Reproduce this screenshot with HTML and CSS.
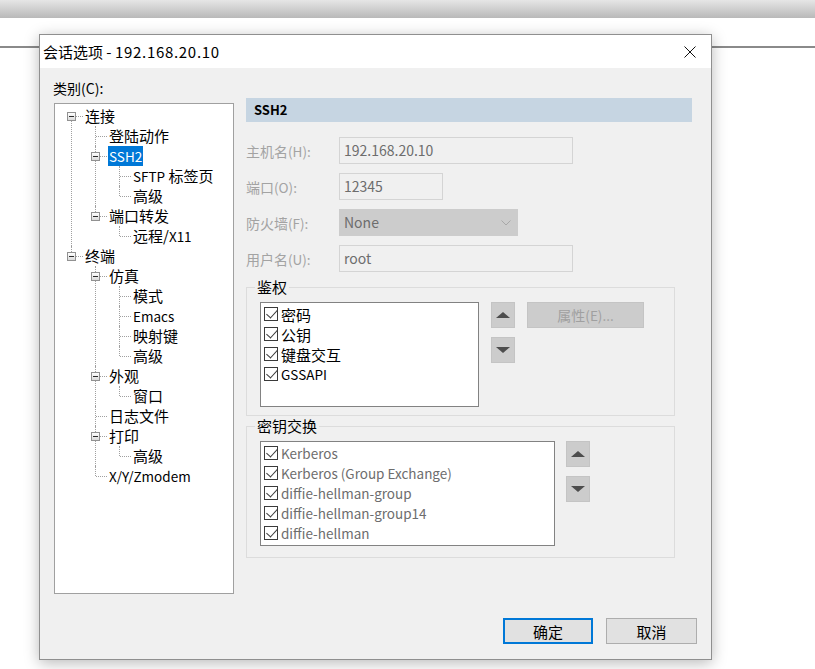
FILE: index.html
```html
<!DOCTYPE html>
<html lang="zh-CN">
<head>
<meta charset="UTF-8">
<title>会话选项</title>
<link rel="stylesheet" href="styles.css">
</head>
<body>
<div id="desktop">
  <div class="dialog">
    <div class="titlebar">
      <span class="title">会话选项 - <span class="addr">192.168.20.10</span></span>
      <span class="close">
        <svg width="12" height="12" viewBox="0 0 12 12"><path d="M0.5 0.5L11.5 11.5M11.5 0.5L0.5 11.5" stroke="#111" stroke-width="1" fill="none"/></svg>
      </span>
    </div>

    <div class="dialog-body">
      <div class="main">
        <div class="left">
          <div class="caption">类别(C):</div>
          <div class="tree-box">
            <ul class="tree">
              <li><div class="row"><span class="exp"></span>连接</div>
                <ul>
                  <li><div class="row">登陆动作</div></li>
                  <li><div class="row"><span class="exp"></span><span class="sel lat">SSH2</span></div>
                    <ul>
                      <li><div class="row"><span class="lat">SFTP</span> 标签页</div></li>
                      <li><div class="row">高级</div></li>
                    </ul>
                  </li>
                  <li><div class="row"><span class="exp"></span>端口转发</div>
                    <ul>
                      <li><div class="row">远程/<span class="lat">X11</span></div></li>
                    </ul>
                  </li>
                </ul>
              </li>
              <li><div class="row"><span class="exp"></span>终端</div>
                <ul>
                  <li><div class="row"><span class="exp"></span>仿真</div>
                    <ul>
                      <li><div class="row">模式</div></li>
                      <li><div class="row"><span class="lat">Emacs</span></div></li>
                      <li><div class="row">映射键</div></li>
                      <li><div class="row">高级</div></li>
                    </ul>
                  </li>
                  <li><div class="row"><span class="exp"></span>外观</div>
                    <ul>
                      <li><div class="row">窗口</div></li>
                    </ul>
                  </li>
                  <li><div class="row">日志文件</div></li>
                  <li><div class="row"><span class="exp"></span>打印</div>
                    <ul>
                      <li><div class="row">高级</div></li>
                    </ul>
                  </li>
                  <li><div class="row"><span class="lat">X/Y/Zmodem</span></div></li>
                </ul>
              </li>
            </ul>
          </div>
        </div>

        <div class="right">
          <div class="section-bar">SSH2</div>

          <div class="form">
            <label>主机名<span class="lat">(H):</span></label>
            <div class="field w-long">192.168.20.10</div>
            <label>端口<span class="lat">(O):</span></label>
            <div class="field w-short">12345</div>
            <label>防火墙<span class="lat">(F):</span></label>
            <div class="field select w-mid">None
              <svg width="10" height="6" viewBox="0 0 10 6"><path d="M0.5 0.5L5 5L9.5 0.5" stroke="#a8a8a8" fill="none"/></svg>
            </div>
            <label>用户名<span class="lat">(U):</span></label>
            <div class="field w-long">root</div>
          </div>

          <fieldset class="group">
            <legend>鉴权</legend>
            <ul class="listbox auth">
              <li><span class="check"></span>密码</li>
              <li><span class="check"></span>公钥</li>
              <li><span class="check"></span>键盘交互</li>
              <li><span class="check"></span><span class="lat">GSSAPI</span></li>
            </ul>
            <div class="arrows">
              <div class="arrow up"></div>
              <div class="arrow down"></div>
            </div>
            <div class="btn-prop">属性<span class="lat">(E)...</span></div>
          </fieldset>

          <fieldset class="group kex">
            <legend>密钥交换</legend>
            <ul class="listbox dim">
              <li><span class="check"></span><span class="lat">Kerberos</span></li>
              <li><span class="check"></span><span class="lat">Kerberos (Group Exchange)</span></li>
              <li><span class="check"></span><span class="lat">diffie-hellman-group</span></li>
              <li><span class="check"></span><span class="lat">diffie-hellman-group14</span></li>
              <li><span class="check"></span><span class="lat">diffie-hellman</span></li>
            </ul>
            <div class="arrows">
              <div class="arrow up"></div>
              <div class="arrow down"></div>
            </div>
          </fieldset>
        </div>
      </div>

      <div class="footer">
        <button class="btn default">确定</button>
        <button class="btn">取消</button>
      </div>
    </div>
  </div>
</div>
</body>
</html>
```

FILE: styles.css
```css
* {
    box-sizing: border-box;
}

body {
    margin: 0;
    font-family: "Noto Sans CJK SC", "Noto Sans", sans-serif;
    font-size: 14px;
    color: #000;
    background: #fff;
}

#desktop {
    height: 669px;
    padding: 34px 0 0 39px;
    overflow: hidden;
    background:
        linear-gradient(#e6e6e6, #b9b9b9) 0 0 / 100% 18px no-repeat,
        linear-gradient(#8a8a8a, #8a8a8a) 0 46px / 100% 2px no-repeat,
        #fff;
}

.dialog {
    width: 673px;
    height: 626px;
    border: 1px solid #8f8f8f;
    background: #f0f0f0;
    box-shadow: 0 3px 14px rgba(0, 0, 0, 0.28);
    display: flex;
    flex-direction: column;
}

.titlebar {
    height: 33px;
    background: #fff;
    display: flex;
    align-items: center;
}

.title {
    flex: 1;
    padding-left: 3px;
    font-size: 15px;
}

.title .addr {
    letter-spacing: 0.7px;
}

.close {
    width: 42px;
    height: 33px;
    display: flex;
    align-items: center;
    justify-content: center;
}

.dialog-body {
    flex: 1;
    display: flex;
    flex-direction: column;
}

.main {
    display: flex;
    gap: 12px;
    padding: 10px 0 0 14px;
}

.lat {
    font-size: 13.5px;
}

/* left: category tree */

.caption {
    line-height: 20px;
    margin: 0 0 5px -1px;
}

.tree-box {
    width: 180px;
    height: 491px;
    background: #fff;
    border: 1px solid #a0a0a0;
    padding-top: 2px;
    font-size: 15px;
}

.tree, .tree ul {
    list-style: none;
    margin: 0;
    padding: 0;
}

.tree ul {
    padding-left: 24px;
}

.tree li {
    position: relative;
}

.tree li::before {
    content: "";
    position: absolute;
    left: 16px;
    top: 0;
    bottom: 0;
    border-left: 1px dotted #a0a0a0;
}

.tree li:last-child::before {
    bottom: auto;
    height: 10px;
}

.tree > li:first-child::before {
    top: 10px;
}

.tree .row {
    position: relative;
    height: 20px;
    line-height: 20px;
    padding-left: 30px;
    white-space: nowrap;
}

.tree .row::before {
    content: "";
    position: absolute;
    left: 17px;
    top: 10px;
    width: 11px;
    border-top: 1px dotted #a0a0a0;
}

.tree .exp {
    position: absolute;
    left: 12px;
    top: 6px;
    width: 9px;
    height: 9px;
    border: 1px solid #919191;
    background: linear-gradient(#ffffff, #dadada);
    z-index: 1;
}

.tree .exp::after {
    content: "";
    position: absolute;
    left: 1px;
    top: 3px;
    width: 5px;
    height: 1px;
    background: #2b2b2b;
}

.tree .sel {
    display: inline-block;
    background: #0078d7;
    color: #fff;
    padding: 0 1px;
    margin-left: -1px;
}

/* right: SSH2 page */

.right {
    width: 446px;
    padding-top: 20px;
}

.section-bar {
    height: 24px;
    line-height: 24px;
    background: #c6d5e2;
    padding-left: 8px;
    font-size: 13px;
    font-weight: bold;
}

.form {
    display: grid;
    grid-template-columns: 93px auto;
    grid-auto-rows: 27px;
    row-gap: 9px;
    align-items: center;
    margin-top: 15px;
}

.form label {
    color: #a3a3a3;
}

.field {
    height: 27px;
    line-height: 25px;
    padding-left: 4px;
    border: 1px solid #d4d4d4;
    background: #f0f0f0;
    color: #6d6d6d;
}

.w-long {
    width: 234px;
}

.w-short {
    width: 104px;
}

.w-mid {
    width: 179px;
}

.field.select {
    position: relative;
    background: #cccccc;
    border-color: #cccccc;
}

.field.select svg {
    position: absolute;
    right: 6px;
    top: 10px;
}

.group {
    display: flex;
    align-items: flex-start;
    width: 429px;
    min-width: 0;
    margin: 6px 0 0 0;
    padding: 6px 12px 8px 13px;
    border: 1px solid #dcdcdc;
}

.group.kex {
    margin-top: 1px;
    padding-bottom: 11px;
}

.group legend {
    margin-left: -5px;
    padding: 0 2px;
    line-height: 18px;
    font-size: 15px;
}

.listbox {
    list-style: none;
    margin: 0;
    width: 219px;
    height: 105px;
    padding: 1px 0 0 3px;
    background: #fff;
    border: 1px solid #828282;
    font-size: 15px;
}

.kex .listbox {
    width: 295px;
}

.listbox li {
    height: 20px;
    display: flex;
    align-items: center;
    white-space: nowrap;
}

.listbox.dim li {
    color: #6d6d6d;
}

.check {
    position: relative;
    flex: none;
    width: 14px;
    height: 14px;
    margin-right: 3px;
    border: 1px solid #3a3a3a;
    background: #fff;
}

.check::after {
    content: "";
    position: absolute;
    left: 4px;
    top: -1px;
    width: 5px;
    height: 10px;
    border: solid #3a3a3a;
    border-width: 0 1px 1px 0;
    transform: rotate(42deg);
}

.arrows {
    display: flex;
    flex-direction: column;
    gap: 9px;
    margin-left: 12px;
}

.kex .arrows {
    margin-left: 11px;
}

.arrow {
    width: 24px;
    height: 26px;
    background: #cccccc;
    border: 1px solid #c4c4c4;
    display: flex;
    align-items: center;
    justify-content: center;
}

.arrow::after {
    content: "";
    border-left: 7px solid transparent;
    border-right: 7px solid transparent;
}

.arrow.up::after {
    border-bottom: 6px solid #4d4d4d;
}

.arrow.down::after {
    border-top: 6px solid #4d4d4d;
}

.btn-prop {
    margin-left: 12px;
    width: 117px;
    height: 26px;
    line-height: 24px;
    text-align: center;
    background: #cccccc;
    border: 1px solid #c4c4c4;
    color: #a0a0a0;
}

/* bottom buttons */

.footer {
    margin-top: auto;
    display: flex;
    justify-content: flex-end;
    gap: 13px;
    padding: 0 14px 15px 0;
}

.btn {
    width: 91px;
    height: 26px;
    padding: 0;
    font-family: inherit;
    font-size: 15px;
    color: #000;
    background: #e1e1e1;
    border: 1px solid #adadad;
}

.btn.default {
    width: 90px;
    border: 2px solid #0078d7;
}
```
